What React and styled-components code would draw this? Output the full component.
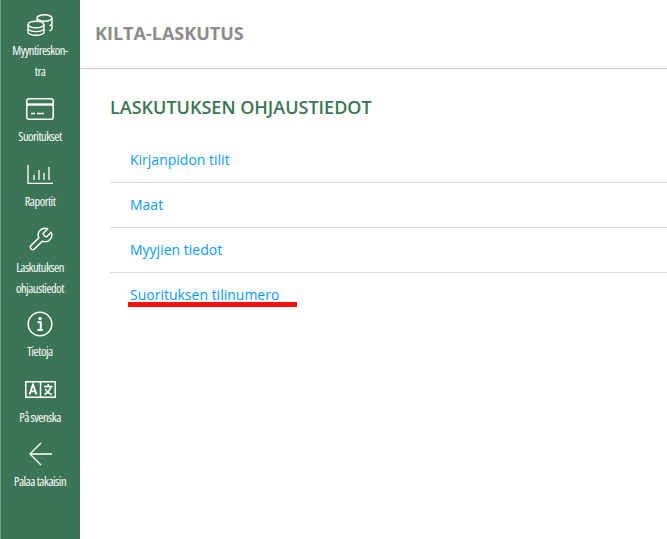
import React from "react";
import styled, { createGlobalStyle } from "styled-components";

const GlobalStyle = createGlobalStyle`
  html, body {
    margin: 0;
    padding: 0;
    background: #fff;
  }
  body {
    font-family: "Open Sans", "Liberation Sans", sans-serif;
  }
`;

const Page = styled.div`
  display: flex;
  width: 667px;
  height: 539px;
  overflow: hidden;
`;

const Sidebar = styled.nav`
  flex: 0 0 80px;
  box-sizing: border-box;
  padding: 12px 1px 0 0;
  background: #3c7556;
  border-left: 1px solid #76a08a;
  display: flex;
  flex-direction: column;
  color: #fff;
`;

const NavItem = styled.a`
  display: flex;
  flex-direction: column;
  align-items: center;
  height: ${(p) => p.$h}px;
  color: #fff;
`;

const IconSlot = styled.div`
  height: 26px;
  display: flex;
  align-items: center;
  justify-content: center;
`;

const NavLabel = styled.span`
  margin-top: ${(p) => p.$gap}px;
  font-size: 12.5px;
  font-stretch: 75%;
  line-height: 21px;
  text-align: center;
  white-space: pre-line;
  letter-spacing: -0.5px;
`;

const Main = styled.main`
  flex: 1;
  min-width: 0;
`;

const Header = styled.header`
  height: 69px;
  box-sizing: border-box;
  border-bottom: 1px solid #ccc;
  padding: 21px 0 0 15px;
`;

const AppTitle = styled.h1`
  margin: 0;
  font-size: 18px;
  line-height: 25px;
  font-weight: 700;
  color: #8c8c8c;
`;

const Content = styled.section`
  padding: 26px 0 0 30px;
`;

const SectionTitle = styled.h2`
  margin: 0 0 18px;
  font-size: 18px;
  line-height: 25px;
  font-weight: 600;
  color: #3c7556;
`;

const LinkList = styled.ul`
  margin: 0;
  padding: 0;
  list-style: none;
`;

const LinkRow = styled.li`
  height: 45px;
  box-sizing: border-box;
  padding: 10px 0 0 20px;
  border-bottom: ${(p) => (p.$last ? "none" : "1px solid #ddd")};
`;

const RowLink = styled.a`
  position: relative;
  display: inline-block;
  font-size: 14px;
  line-height: 20px;
  color: #0a9bf5;
`;

const Highlight = styled.span`
  position: absolute;
  left: -2px;
  right: -18px;
  top: 17px;
  height: 5px;
  background: #ff0f0f;
`;

const CoinsIcon = () => (
  <svg width="26" height="22" viewBox="0 0 26 22" fill="none" stroke="#fff" strokeWidth="1.4">
    <ellipse cx="17.500" cy="4" rx="7.500" ry="3.200" />
    <path d="M25 4v10.500c0 1-1 1.900-2.500 2.500M25 9.300c0 1-1 1.900-2.500 2.500M10 4.500v2" />
    <ellipse cx="9" cy="10.500" rx="8" ry="3.300" />
    <path d="M1 10.500v7.500c0 1.900 3.600 3.300 8 3.300s8-1.400 8-3.300v-7.500M1 14.300c0 1.900 3.600 3.300 8 3.300s8-1.400 8-3.300" />
  </svg>
);

const CardIcon = () => (
  <svg width="28" height="22" viewBox="0 0 28 22" fill="none" stroke="#fff" strokeWidth="1.5">
    <rect x="0.800" y="0.800" width="26.400" height="20.400" rx="2" />
    <path d="M1 6.500h26" strokeWidth="2.400" />
    <path d="M5 15.500h4M11 15.500h7" />
  </svg>
);

const ChartIcon = () => (
  <svg width="26" height="19" viewBox="0 0 26 19" fill="none" stroke="#fff" strokeWidth="1.300">
    <path d="M1 0v18.300h25" />
    <path d="M7 10v5M12 5v10M17 8v7M22 2v13" />
  </svg>
);

const WrenchIcon = () => (
  <svg width="27" height="27" viewBox="0 0 24 24" fill="none" stroke="#fff" strokeWidth="1.300" strokeLinecap="round" strokeLinejoin="round">
    <path d="M14.700 6.300a1 1 0 0 0 0 1.400l1.600 1.600a1 1 0 0 0 1.400 0l3.770-3.770a6 6 0 0 1-7.940 7.940l-6.910 6.910a2.120 2.120 0 0 1-3-3l6.910-6.910a6 6 0 0 1 7.940-7.940l-3.760 3.760z" />
  </svg>
);

const InfoIcon = () => (
  <svg width="26" height="26" viewBox="0 0 26 26" fill="none" stroke="#fff">
    <circle cx="13" cy="13" r="11.800" strokeWidth="1.500" />
    <circle cx="13" cy="7.600" r="1.700" fill="#fff" stroke="none" />
    <path d="M10.600 11.200h3.200v7.600M10.400 18.900h5.400" strokeWidth="2" />
  </svg>
);

const TranslateIcon = () => (
  <svg width="31" height="17" viewBox="0 0 31 17" fill="none" stroke="#fff" strokeWidth="1.500">
    <rect x="0.750" y="0.750" width="29.500" height="15.500" />
    <path d="M15.500 0.700v15.600" />
    <path d="M4.500 13.500l3.500-10 3.500 10M5.800 10.300h4.400" strokeWidth="1.800" />
    <path d="M19 5.500h8.500M23.200 3v2.500M26 5.500c-.8 3.500-3 6-6.500 8M20.500 8c1 2.500 3 4.500 6.500 5.500" strokeWidth="1.500" />
  </svg>
);

const ArrowIcon = () => (
  <svg width="23" height="24" viewBox="0 0 23 24" fill="none" stroke="#fff" strokeWidth="1.300">
    <path d="M23 12H1M12 1L1 12l11 11" />
  </svg>
);

const navItems = [
  { label: "Myyntireskon-\ntra", icon: <CoinsIcon />, h: 84, gap: 2 },
  { label: "Suoritukset", icon: <CardIcon />, h: 65, gap: 4 },
  { label: "Raportit", icon: <ChartIcon />, h: 65, gap: 4 },
  { label: "Laskutuksen\nohjaustiedot", icon: <WrenchIcon />, h: 85, gap: 5 },
  { label: "Tietoja", icon: <InfoIcon />, h: 65, gap: 4 },
  { label: "På svenska", icon: <TranslateIcon />, h: 65, gap: 5 },
  { label: "Palaa takaisin", icon: <ArrowIcon />, h: 60, gap: 4 },
];

const links = ["Kirjanpidon tilit", "Maat", "Myyjien tiedot", "Suorituksen tilinumero"];

export default function App() {
  return (
    <>
      <GlobalStyle />
      <Page>
        <Sidebar>
          {navItems.map((item) => (
            <NavItem key={item.label} $h={item.h}>
              <IconSlot>{item.icon}</IconSlot>
              <NavLabel $gap={item.gap}>{item.label}</NavLabel>
            </NavItem>
          ))}
        </Sidebar>
        <Main>
          <Header>
            <AppTitle>KILTA-LASKUTUS</AppTitle>
          </Header>
          <Content>
            <SectionTitle>LASKUTUKSEN OHJAUSTIEDOT</SectionTitle>
            <LinkList>
              {links.map((text, i) => {
                const last = i === links.length - 1;
                return (
                  <LinkRow key={text} $last={last}>
                    <RowLink>
                      {text}
                      {last && <Highlight />}
                    </RowLink>
                  </LinkRow>
                );
              })}
            </LinkList>
          </Content>
        </Main>
      </Page>
    </>
  );
}
